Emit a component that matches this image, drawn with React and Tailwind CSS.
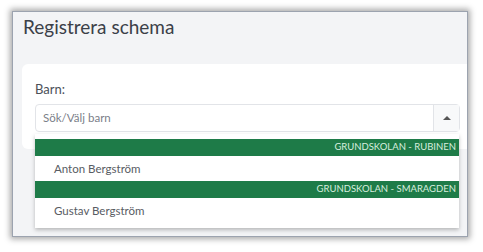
export default function App() {
  const groups = [
    { school: "Grundskolan - Rubinen", children: ["Anton Bergström"] },
    { school: "Grundskolan - Smaragden", children: ["Gustav Bergström"] },
  ];

  return (
    <div className="w-[483px] h-[252px] bg-white pt-[11px] pl-[12px] font-['Lato',sans-serif]">
      {/* Window frame */}
      <div className="w-[456px] h-[226px] bg-[#f3f4f6] border border-[#9ca3af] shadow-[0_0_6px_2px_rgba(0,0,0,0.35)] overflow-hidden">
        <h1 className="pl-[10px] pt-[3px] text-[19px] leading-[24px] text-[#3b4048]">
          Registrera schema
        </h1>

        {/* Card */}
        <div className="mt-[25px] ml-[9px] h-[85px] rounded-l-md bg-white pl-[13px] pt-[16px]">
          <p className="text-[13px] leading-[18px] text-[#4b5058]">Barn:</p>

          <div className="relative mt-[6px] w-[425px]">
            <div className="flex h-[28px] rounded border border-[#e2e4e8]">
              <div className="flex flex-1 items-center pl-[7px] text-[11.5px] text-[#7b8089]">
                Sök/Välj barn
              </div>
              <div className="flex w-[26px] items-center justify-center border-l border-[#e2e4e8] bg-[#f8f9fa]">
                <span className="block h-0 w-0 border-x-[4px] border-b-[4px] border-x-transparent border-b-[#555]" />
              </div>
            </div>

            {/* Dropdown list */}
            <div className="absolute left-0 top-[30px] w-[424px] bg-white pt-[5px] pb-[5px] shadow-[0_2px_4px_rgba(0,0,0,0.25)]">
              {groups.map((g) => (
                <div key={g.school}>
                  <div className="flex h-[17px] items-center justify-end bg-[#1e7b48] pr-[3px] text-[9.5px] uppercase text-[#d8eedf]">
                    {g.school}
                  </div>
                  {g.children.map((c) => (
                    <div
                      key={c}
                      className="flex h-[25px] items-center pl-[19px] text-[11.5px] text-[#585c63]"
                    >
                      {c}
                    </div>
                  ))}
                </div>
              ))}
            </div>
          </div>
        </div>
      </div>
    </div>
  );
}
